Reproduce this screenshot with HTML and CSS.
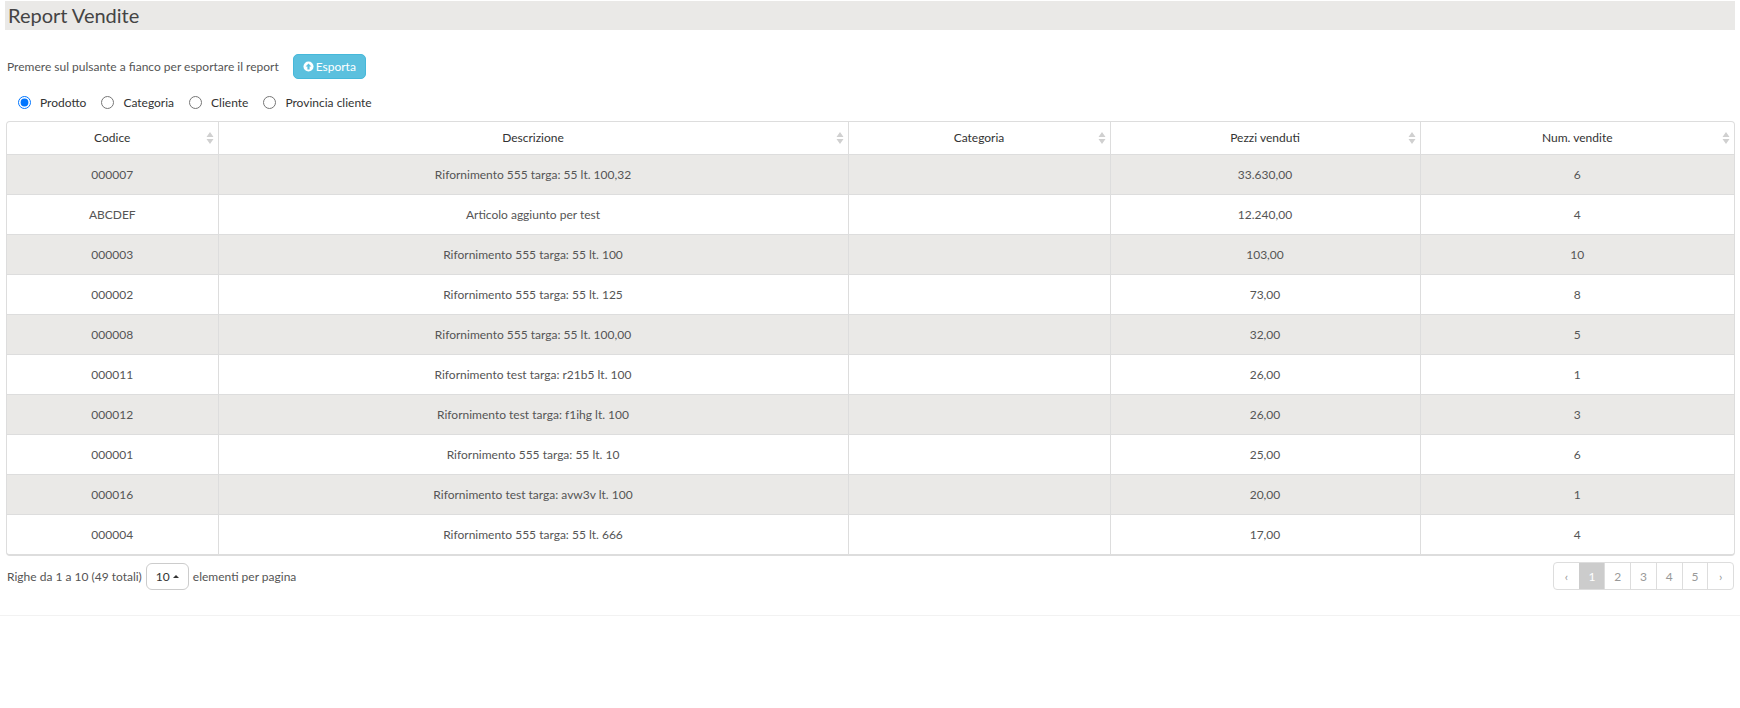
FILE: index.html
```html
<!DOCTYPE html>
<html lang="it">
<head>
<meta charset="utf-8">
<title>Report Vendite</title>
<link rel="stylesheet" href="styles.css">
</head>
<body>
<main class="panel">
  <h1 class="title">Report Vendite</h1>
  <div class="export">
    <span>Premere sul pulsante a fianco per esportare il report</span>
    <button class="btn-export" type="button">
      <svg class="ico" viewBox="0 0 12 12" width="11" height="11"><circle cx="6" cy="6" r="5.5" fill="#fff"/><path d="M6 2.6 9.2 6H7.2v3.2H4.8V6H2.8z" fill="#5bc0de"/></svg>Esporta
    </button>
  </div>
  <form class="radios">
    <label class="radio"><input type="radio" name="g" checked>Prodotto</label>
    <label class="radio"><input type="radio" name="g">Categoria</label>
    <label class="radio"><input type="radio" name="g">Cliente</label>
    <label class="radio"><input type="radio" name="g">Provincia cliente</label>
  </form>
  <div class="table-wrap">
    <table class="report">
      <colgroup><col class="c1"><col class="c2"><col class="c3"><col class="c4"><col class="c5"></colgroup>
      <thead>
        <tr>
          <th>Codice<svg class="sort" viewBox="0 0 8 12" width="8" height="12"><path d="M4 0 7.5 5H.5zM4 12 .5 7h7z"/></svg></th>
          <th>Descrizione<svg class="sort" viewBox="0 0 8 12" width="8" height="12"><path d="M4 0 7.5 5H.5zM4 12 .5 7h7z"/></svg></th>
          <th>Categoria<svg class="sort" viewBox="0 0 8 12" width="8" height="12"><path d="M4 0 7.5 5H.5zM4 12 .5 7h7z"/></svg></th>
          <th>Pezzi venduti<svg class="sort" viewBox="0 0 8 12" width="8" height="12"><path d="M4 0 7.5 5H.5zM4 12 .5 7h7z"/></svg></th>
          <th>Num. vendite<svg class="sort" viewBox="0 0 8 12" width="8" height="12"><path d="M4 0 7.5 5H.5zM4 12 .5 7h7z"/></svg></th>
        </tr>
      </thead>
      <tbody>
        <tr><td>000007</td><td>Rifornimento 555 targa: 55 lt. 100,32</td><td></td><td>33.630,00</td><td>6</td></tr>
        <tr><td>ABCDEF</td><td>Articolo aggiunto per test</td><td></td><td>12.240,00</td><td>4</td></tr>
        <tr><td>000003</td><td>Rifornimento 555 targa: 55 lt. 100</td><td></td><td>103,00</td><td>10</td></tr>
        <tr><td>000002</td><td>Rifornimento 555 targa: 55 lt. 125</td><td></td><td>73,00</td><td>8</td></tr>
        <tr><td>000008</td><td>Rifornimento 555 targa: 55 lt. 100,00</td><td></td><td>32,00</td><td>5</td></tr>
        <tr><td>000011</td><td>Rifornimento test targa: r21b5 lt. 100</td><td></td><td>26,00</td><td>1</td></tr>
        <tr><td>000012</td><td>Rifornimento test targa: f1ihg lt. 100</td><td></td><td>26,00</td><td>3</td></tr>
        <tr><td>000001</td><td>Rifornimento 555 targa: 55 lt. 10</td><td></td><td>25,00</td><td>6</td></tr>
        <tr><td>000016</td><td>Rifornimento test targa: avw3v lt. 100</td><td></td><td>20,00</td><td>1</td></tr>
        <tr><td>000004</td><td>Rifornimento 555 targa: 55 lt. 666</td><td></td><td>17,00</td><td>4</td></tr>
      </tbody>
    </table>
  </div>
  <div class="pager-row">
    <div class="info">
      <span>Righe da 1 a 10 (49 totali)</span>
      <button class="size" type="button">10<span class="caret"></span></button>
      <span>elementi per pagina</span>
    </div>
    <nav class="pager">
      <a class="pg arrow">‹</a><a class="pg on">1</a><a class="pg">2</a><a class="pg">3</a><a class="pg">4</a><a class="pg">5</a><a class="pg arrow">›</a>
    </nav>
  </div>
</main>
</body>
</html>
```
FILE: styles.css
```css
* { box-sizing: border-box; }
html, body { margin: 0; background: #fff; }
body { height: 708px; overflow: hidden; font-family: "Lato", "Liberation Sans", sans-serif; font-size: 12px; color: #555; }
.panel { height: 616px; padding: 1px 5px 0 5px; border-bottom: 1px solid #f2f2f2; }
.title { margin: 0; height: 29px; padding: 0 0 0 3px; background: #eae9e7; font-size: 20px; line-height: 28px; font-weight: 400; color: #444; }
.export { display: flex; align-items: center; margin-top: 23px; padding-left: 2px; height: 26px; }
.btn-export { display: inline-flex; align-items: center; justify-content: center; gap: 2px; width: 73px; height: 25px; margin-left: 14px; padding: 0; border: 1px solid #46b8da; border-radius: 5px; background: #5bc0de; color: #fff; font: inherit; }
.ico { display: block; }
.radios { display: flex; height: 22px; margin-top: 12px; padding-left: 13px; align-items: center; gap: 15px; color: #333; }
.radio { display: flex; align-items: center; }
.radio input { width: 13px; height: 13px; margin: 0 9px 0 0; }
.table-wrap { margin: 8px 0 0 1px; border: 1px solid #ddd; border-bottom-width: 2px; border-radius: 4px; width: 1729px; overflow: hidden; }
.report { width: 100%; table-layout: fixed; border-collapse: collapse; }
.c1 { width: 211px; } .c2 { width: 630px; } .c3 { width: 262px; } .c4 { width: 310px; }
.report th { position: relative; height: 32px; font-weight: 400; color: #333; border-left: 1px solid #ddd; border-bottom: 1px solid #ddd; padding: 0; }
.report td { height: 40px; text-align: center; padding: 0; border-left: 1px solid #ddd; border-bottom: 1px solid #ddd; }
.report th:first-child, .report td:first-child { border-left: 0; }
.report tbody tr:last-child td { border-bottom: 0; }
.report tbody tr:nth-child(odd) td { background: #eae9e7; }
.sort { position: absolute; right: 4px; top: 10px; fill: #d0d0d0; }
.pager-row { display: flex; justify-content: space-between; padding: 6px 1px 0 2px; }
.info { display: flex; align-items: center; gap: 4px; height: 28px; }
.size { width: 43px; height: 27px; padding: 0; border: 1px solid #ccc; border-radius: 6px; background: #fff; color: #333; font: inherit; display: inline-flex; align-items: center; justify-content: center; gap: 3px; }
.caret { width: 0; height: 0; border-left: 3px solid transparent; border-right: 3px solid transparent; border-bottom: 3px solid #333; }
.pager { display: flex; height: 28px; border: 1px solid #ddd; border-radius: 4px; overflow: hidden; width: 181px; }
.pg { flex: 1 1 0; display: flex; align-items: center; justify-content: center; color: #999; border-left: 1px solid #ddd; }
.pg:first-child { border-left: 0; }
.pg.on { background: #ccc; color: #fff; border-color: #ccc; }
```
